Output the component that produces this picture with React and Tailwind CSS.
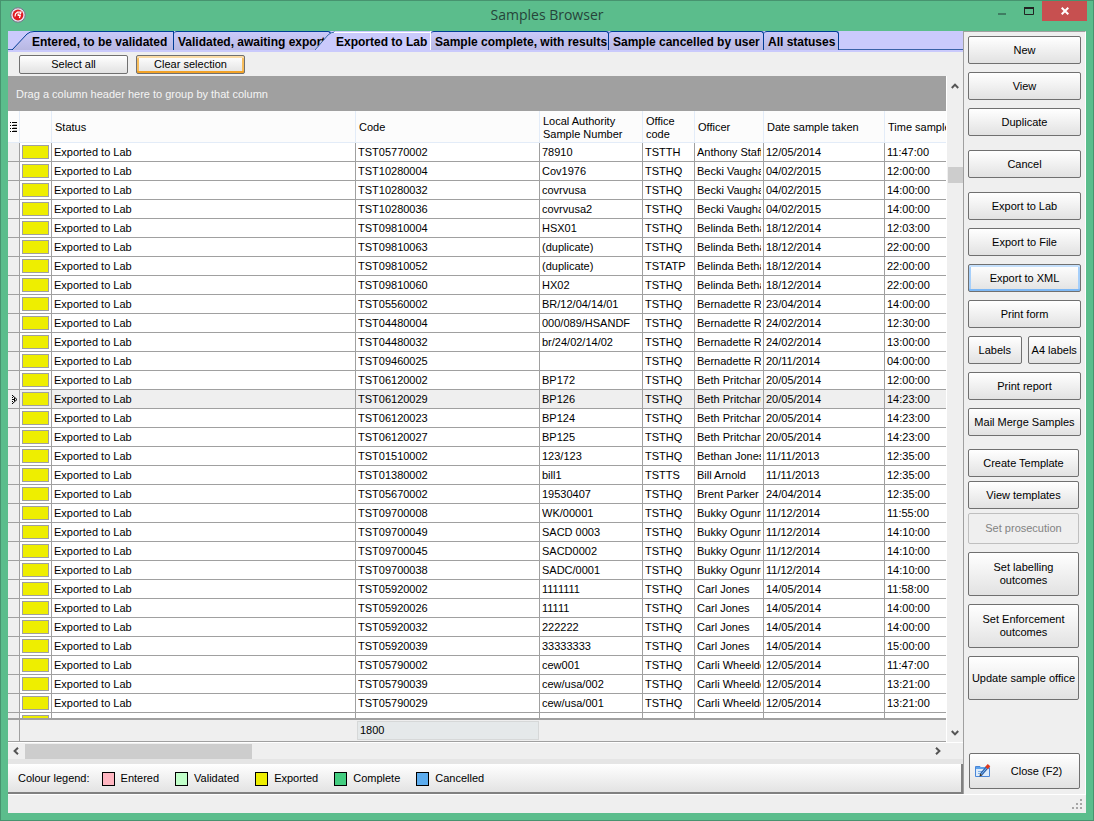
import clsx from "clsx";

const tabs = [
  { label: "Entered, to be validated", style: "w-[166px] pl-6", first: true },
  { label: "Validated, awaiting export", style: "w-[157px] pl-1" },
  { label: "Exported to Lab", style: "w-[116px] -ml-4 pl-[21px] z-10", active: true },
  { label: "Sample complete, with results", style: "w-[178px] pl-1" },
  { label: "Sample cancelled by user", style: "w-[155px] pl-1" },
  { label: "All statuses", style: "w-[75px] pl-1" },
];

const columns = [
  { title: "Status", width: "w-[304px]" },
  { title: "Code", width: "w-[184px]" },
  { title: "Local Authority Sample Number", width: "w-[103px]" },
  { title: "Office code", width: "w-[52px]" },
  { title: "Officer", width: "w-[69px]" },
  { title: "Date sample taken", width: "w-[121px]" },
  { title: "Time sample", width: "" },
];

const samples = [
  ["TST05770002", "78910", "TSTTH", "Anthony Staff", "12/05/2014", "11:47:00"],
  ["TST10280004", "Cov1976", "TSTHQ", "Becki Vaugha", "04/02/2015", "12:00:00"],
  ["TST10280032", "covrvusa", "TSTHQ", "Becki Vaugha", "04/02/2015", "14:00:00"],
  ["TST10280036", "covrvusa2", "TSTHQ", "Becki Vaugha", "04/02/2015", "14:00:00"],
  ["TST09810004", "HSX01", "TSTHQ", "Belinda Betha", "18/12/2014", "12:03:00"],
  ["TST09810063", "(duplicate)", "TSTHQ", "Belinda Betha", "18/12/2014", "22:00:00"],
  ["TST09810052", "(duplicate)", "TSTATP", "Belinda Betha", "18/12/2014", "22:00:00"],
  ["TST09810060", "HX02", "TSTHQ", "Belinda Betha", "18/12/2014", "22:00:00"],
  ["TST05560002", "BR/12/04/14/01", "TSTHQ", "Bernadette R", "23/04/2014", "14:00:00"],
  ["TST04480004", "000/089/HSANDF", "TSTHQ", "Bernadette R", "24/02/2014", "12:30:00"],
  ["TST04480032", "br/24/02/14/02", "TSTHQ", "Bernadette R", "24/02/2014", "13:00:00"],
  ["TST09460025", "", "TSTHQ", "Bernadette R", "20/11/2014", "04:00:00"],
  ["TST06120002", "BP172", "TSTHQ", "Beth Pritchard", "20/05/2014", "12:00:00"],
  ["TST06120029", "BP126", "TSTHQ", "Beth Pritchard", "20/05/2014", "14:23:00"],
  ["TST06120023", "BP124", "TSTHQ", "Beth Pritchard", "20/05/2014", "14:23:00"],
  ["TST06120027", "BP125", "TSTHQ", "Beth Pritchard", "20/05/2014", "14:23:00"],
  ["TST01510002", "123/123", "TSTHQ", "Bethan Jones", "11/11/2013", "12:35:00"],
  ["TST01380002", "bill1", "TSTTS", "Bill Arnold", "11/11/2013", "12:35:00"],
  ["TST05670002", "19530407", "TSTHQ", "Brent Parker", "24/04/2014", "12:35:00"],
  ["TST09700008", "WK/00001", "TSTHQ", "Bukky Ogunro", "11/12/2014", "11:55:00"],
  ["TST09700049", "SACD 0003", "TSTHQ", "Bukky Ogunro", "11/12/2014", "14:10:00"],
  ["TST09700045", "SACD0002", "TSTHQ", "Bukky Ogunro", "11/12/2014", "14:10:00"],
  ["TST09700038", "SADC/0001", "TSTHQ", "Bukky Ogunro", "11/12/2014", "14:10:00"],
  ["TST05920002", "1111111", "TSTHQ", "Carl Jones", "14/05/2014", "11:58:00"],
  ["TST05920026", "11111", "TSTHQ", "Carl Jones", "14/05/2014", "14:00:00"],
  ["TST05920032", "222222", "TSTHQ", "Carl Jones", "14/05/2014", "14:00:00"],
  ["TST05920039", "33333333", "TSTHQ", "Carl Jones", "14/05/2014", "15:00:00"],
  ["TST05790002", "cew001", "TSTHQ", "Carli Wheeldo", "12/05/2014", "11:47:00"],
  ["TST05790039", "cew/usa/002", "TSTHQ", "Carli Wheeldo", "12/05/2014", "13:21:00"],
  ["TST05790029", "cew/usa/001", "TSTHQ", "Carli Wheeldo", "12/05/2014", "13:21:00"],
  ["TST05770041", "cew/usa/000", "TSTHQ", "Carli Wheeldo", "12/05/2014", "13:21:00"],
];

const selectedCode = "TST06120029";

const legend = [
  { label: "Entered", color: "bg-[#ffb6c1]" },
  { label: "Validated", color: "bg-[#c1ffc9]" },
  { label: "Exported", color: "bg-[#eeee00]" },
  { label: "Complete", color: "bg-[#43cd80]" },
  { label: "Cancelled", color: "bg-[#5cacee]" },
];

const Button = ({ children, className, ...props }) => (
  <button
    className={clsx(
      "flex items-center justify-center rounded-[2px] border text-center leading-[13px]",
      props.disabled
        ? "border-[#bfbfbf] bg-[#efefef] text-[#838383]"
        : "border-[#707070] bg-linear-to-b from-white to-[#e2e2e2]",
      className
    )}
    {...props}
  >
    {children}
  </button>
);

const Chevron = ({ className }) => (
  <svg viewBox="0 0 8 8" className={clsx("h-2 w-2 shrink-0", className)}>
    <path d="M0.8 6 L4 2.6 L7.2 6" fill="none" stroke="#555" strokeWidth="2" />
  </svg>
);

const Tab = ({ label, style, active, first }) => {
  const slanted = active || first;
  return (
    <button
      role="tab"
      aria-selected={!!active}
      className={clsx(
        "relative flex h-[19px] shrink-0 items-center overflow-hidden pt-[2px] text-xs font-bold whitespace-nowrap",
        style,
        !slanted && "rounded-t-[3px] border-t border-r border-[#003c96] bg-linear-to-b from-[#cacafa] to-[#b8b8e2]",
        first && "border-r border-[#003c96]",
        active && "border-r border-white"
      )}
    >
      {slanted && (
        <svg
          className="absolute inset-y-0 left-0 h-[19px] w-full"
          viewBox="0 0 166 19"
          preserveAspectRatio="xMinYMin slice"
        >
          <defs>
            <linearGradient id="tabFill" x1="0" y1="0" x2="0" y2="1">
              <stop offset="0" stopColor="#cacafa" />
              <stop offset="1" stopColor="#b8b8e2" />
            </linearGradient>
          </defs>
          {active ? (
            <>
              <path d="M0 19 L13 4 Q16 1 20 1 H166 V19 Z" fill="#cacafc" />
              <path d="M0 19 L13 4 Q16 1 20 1" fill="none" stroke="#3c6ea8" />
              <path d="M19 1.5 H166" stroke="#fff" />
            </>
          ) : (
            <path d="M4 19 L19 3 Q22 0.5 26 0.5 H170 V19" fill="url(#tabFill)" stroke="#003c96" />
          )}
        </svg>
      )}
      <span className="relative">{label}</span>
    </button>
  );
};

const TitleBar = () => (
  <header className="relative flex h-[30px] shrink-0 items-start justify-end">
    <svg viewBox="0 0 16 16" className="absolute top-[6px] left-[9px] h-4 w-4">
      <circle cx="8" cy="8" r="7.2" fill="#e8e8f2" stroke="#7d6f8c" />
      <circle cx="8" cy="8" r="5.4" fill="#e01b22" />
      <path d="M5 9.5 L5.5 6.8 L7.5 5.2 H11 L10.4 7 H8.2 V8.5 H10.2 L9.4 11" fill="none" stroke="#fff" strokeWidth="1.2" />
    </svg>
    <h1 className="absolute inset-x-0 top-[3px] text-center font-['Open_Sans',sans-serif] text-sm leading-[22px] text-[#26443a]">
      Samples Browser
    </h1>
    <button aria-label="Minimize" className="relative flex h-5 w-[29px] items-center justify-center">
      <svg viewBox="0 0 10 10" className="h-[10px] w-[10px]">
        <path d="M1 8 H9" stroke="#3f7d62" strokeWidth="2" />
      </svg>
    </button>
    <button aria-label="Maximize" className="relative flex h-5 w-[26px] items-center justify-center">
      <svg viewBox="0 0 10 8" className="h-2 w-[10px]">
        <path d="M0.5 0 V7.5 H9.5 V0" fill="none" stroke="#222" />
        <path d="M0 1 H10" stroke="#222" strokeWidth="2" />
      </svg>
    </button>
    <button
      aria-label="Close"
      className="relative mr-[6px] flex h-5 w-[45px] items-center justify-center bg-[#c75050]"
    >
      <svg viewBox="0 0 8 8" className="h-2 w-2">
        <path d="M0.7 0.7 L7.3 7.3 M7.3 0.7 L0.7 7.3" stroke="#fff" strokeWidth="2" />
      </svg>
    </button>
  </header>
);

const SampleTable = () => (
  <div className="min-h-0 flex-1 overflow-hidden border-b-2 border-[#a0a0a0] bg-white">
    <table className="w-full table-fixed border-separate border-spacing-0 text-left">
      <thead>
        <tr className="h-8 bg-[#fcfcfc]">
          <th className="w-3 border-r border-b border-[#e3ecf8] p-0">
            <svg viewBox="0 0 8 10" className="ml-[2px] h-[10px] w-2" shapeRendering="crispEdges">
              <path d="M2 0.5H7M2 3.5H7M2 6.5H7M2 9.5H7" stroke="#000" />
              <path d="M3 2.5H7M3 5.5H7M3 8.5H7" stroke="#bbb" />
              <path d="M0 0.5H1M0 3.5H1M0 6.5H1M0 9.5H1" stroke="#000" />
            </svg>
          </th>
          <th className="w-8 border-r border-b border-[#e3ecf8] p-0" />
          {columns.map(({ title, width }) => (
            <th
              key={title}
              className={clsx(
                "overflow-hidden border-r border-b border-[#e3ecf8] p-0 pt-[2px] pl-[3px] leading-[13px] font-normal last:border-r-0 last:whitespace-nowrap",
                width
              )}
            >
              {title}
            </th>
          ))}
        </tr>
      </thead>
      <tbody>
        {samples.map((row) => {
          const selected = row[0] === selectedCode;
          return (
            <tr key={row[0]} className={clsx("h-[19px]", selected && "bg-[#efefef]")}>
              <td className="border-r border-b border-[#a0a0a0] bg-[#efefef] p-0">
                {selected && (
                  <svg viewBox="0 0 6 9" className="ml-1 h-[9px] w-[6px]">
                    <path d="M0.5 0.5 L5 4.5 L0.5 8.5 M1 4.5 H3 M2.5 3 V6" fill="none" stroke="#000" />
                    <path d="M0.5 0 V9" stroke="#000" strokeDasharray="1 1" />
                  </svg>
                )}
              </td>
              <td className="border-r border-b border-[#a0a0a0] p-0">
                <div className="mx-[2px] h-[14px] border border-[#a0a0a0] bg-[#eeee00]" />
              </td>
              {["Exported to Lab", ...row].map((value, i) => (
                <td key={i} className="border-r border-b border-[#a0a0a0] p-0 pr-[2px] pl-[2px] last:border-r-0">
                  <div className="h-[18px] overflow-hidden leading-[18px] whitespace-nowrap">{value}</div>
                </td>
              ))}
            </tr>
          );
        })}
      </tbody>
    </table>
  </div>
);

const Browser = () => (
  <main className="flex min-w-0 flex-1 flex-col">
    <div role="tablist" className="flex h-[19px] shrink-0 border-b border-[#3a62a8] bg-[#cacafc]">
      {tabs.map((tab) => (
        <Tab key={tab.label} {...tab} />
      ))}
    </div>
    <div className="h-[2px] shrink-0 bg-[#cacafc]" />
    <div className="flex h-6 shrink-0 items-center gap-2 pl-[11px]">
      <Button className="h-[19px] w-[109px]">Select all</Button>
      <Button className="h-[19px] w-[109px] shadow-[inset_0_2px_0_#fbdca6,inset_0_-2px_0_#f2a227,inset_2px_0_0_#f7bd5c,inset_-2px_0_0_#f7bd5c]">
        Clear selection
      </Button>
    </div>
    <div className="flex min-h-0 flex-1">
      <div className="flex min-w-0 flex-1 flex-col">
        <div className="flex h-[35px] shrink-0 items-center bg-[#a0a0a0] pt-px pl-2 text-[#f4f4f4]">
          Drag a column header here to group by that column
        </div>
        <SampleTable />
        <div className="flex h-[22px] shrink-0 border-b border-[#a0a0a0]">
          <div className="w-3 border-r border-[#a0a0a0]" />
          <div className="my-px ml-[337px] flex w-[182px] items-center border border-[#d6d8d8] bg-[#e5e9ea] pl-[2px]">
            1800
          </div>
        </div>
      </div>
      <div className="flex w-[17px] flex-col items-center border-l border-white pt-[6px] pb-[5px]">
        <Chevron />
        <div className="mt-[77px] h-4 w-[15px] bg-[#cdcdcd]" />
        <Chevron className="mt-auto rotate-180" />
      </div>
    </div>
    <div className="flex h-[17px] shrink-0 items-center border-t border-white pr-[21px] pl-1">
      <Chevron className="-rotate-90" />
      <div className="ml-[5px] h-[15px] w-[227px] bg-[#cdcdcd]" />
      <Chevron className="ml-auto rotate-90" />
    </div>
    <div className="h-[5px] shrink-0 bg-[#e5e5e5]" />
    <div className="flex h-[30px] shrink-0 items-center gap-4 border-r-2 border-b-2 border-[#808080] bg-linear-to-b from-white to-[#e3e3e3] pt-px pl-[10px]">
      <span className="-mr-1">Colour legend:</span>
      {legend.map(({ label, color }) => (
        <div key={label} className="flex items-center gap-[6px]">
          <span className={clsx("h-[14px] w-[13px] border border-black", color)} />
          {label}
        </div>
      ))}
    </div>
  </main>
);

const Sidebar = () => (
  <aside className="flex w-[123px] shrink-0 flex-col border-t border-r border-l border-t-[#a0a0a0] border-r-white border-l-[#a0a0a0] pt-1 pr-1 pb-[5px] pl-1">
    <div className="flex flex-col gap-2">
      <Button className="h-7">New</Button>
      <Button className="h-7">View</Button>
      <Button className="h-7">Duplicate</Button>
      <Button className="my-[6px] h-7">Cancel</Button>
      <Button className="h-7">Export to Lab</Button>
      <Button className="h-7">Export to File</Button>
      <Button className="h-7 shadow-[inset_0_2px_0_#c5e0fc,inset_0_-2px_0_#7db8f5,inset_2px_0_0_#a6cffa,inset_-2px_0_0_#a6cffa]">
        Export to XML
      </Button>
      <Button className="h-7">Print form</Button>
      <div className="flex gap-[6px]">
        <Button className="h-7 flex-1">Labels</Button>
        <Button className="h-7 flex-1 whitespace-nowrap">A4 labels</Button>
      </div>
      <Button className="h-7">Print report</Button>
      <Button className="h-7 whitespace-nowrap">Mail Merge Samples</Button>
    </div>
    <div className="mt-[13px] mr-[2px] flex flex-col gap-1">
      <Button className="h-7">Create Template</Button>
      <Button className="h-7">View templates</Button>
      <Button className="h-[31px]" disabled>
        Set prosecution
      </Button>
    </div>
    <div className="mt-2 mr-[2px] flex flex-col gap-2">
      <Button className="h-11 px-4">Set labelling outcomes</Button>
      <Button className="h-11 px-3">Set Enforcement outcomes</Button>
      <Button className="h-11 whitespace-nowrap">Update sample office</Button>
    </div>
    <Button className="mt-auto mr-px ml-px h-9 gap-5 pr-3">
      <svg viewBox="0 0 16 14" className="h-[14px] w-4">
        <path d="M0.5 2.5 H5 L6 3.5 H14.5 V12.5 H0.5 Z" fill="#dcebfb" stroke="#4a86d8" />
        <path d="M1 3 H14 V5 H1 Z" fill="#5fa3ea" />
        <path d="M3 7.5 H8 M3 9.5 H6" stroke="#7fb0e6" />
        <path d="M6 10.5 L12 3.5" stroke="#2c5fa8" strokeWidth="3" />
        <path d="M6 10.5 L12 3.5" stroke="#7cb8f0" />
        <path d="M11.5 4 L14 1.2" stroke="#e0391c" strokeWidth="3.4" />
        <path d="M4.5 12.5 L5 9.5 L7.3 11.4 Z" fill="#3b3020" />
      </svg>
      Close (F2)
    </Button>
  </aside>
);

const App = () => (
  <div className="flex h-screen flex-col border border-[#47936f] bg-[#5bbd8c] font-['Liberation_Sans',sans-serif] text-[11px] text-black">
    <TitleBar />
    <div className="mx-[7px] mb-[7px] flex min-h-0 flex-1 flex-col bg-[#efefef]">
      <div className="flex min-h-0 flex-1">
        <Browser />
        <Sidebar />
      </div>
      <footer className="flex h-[19px] shrink-0 items-end justify-end border-t border-white p-1">
        <svg viewBox="0 0 10 10" className="h-[10px] w-[10px]" fill="#a6a6a6">
          <path d="M8 0h2v2H8zM4 4h2v2H4zM8 4h2v2H8zM0 8h2v2H0zM4 8h2v2H4zM8 8h2v2H8z" />
        </svg>
      </footer>
    </div>
  </div>
);

export default App;
